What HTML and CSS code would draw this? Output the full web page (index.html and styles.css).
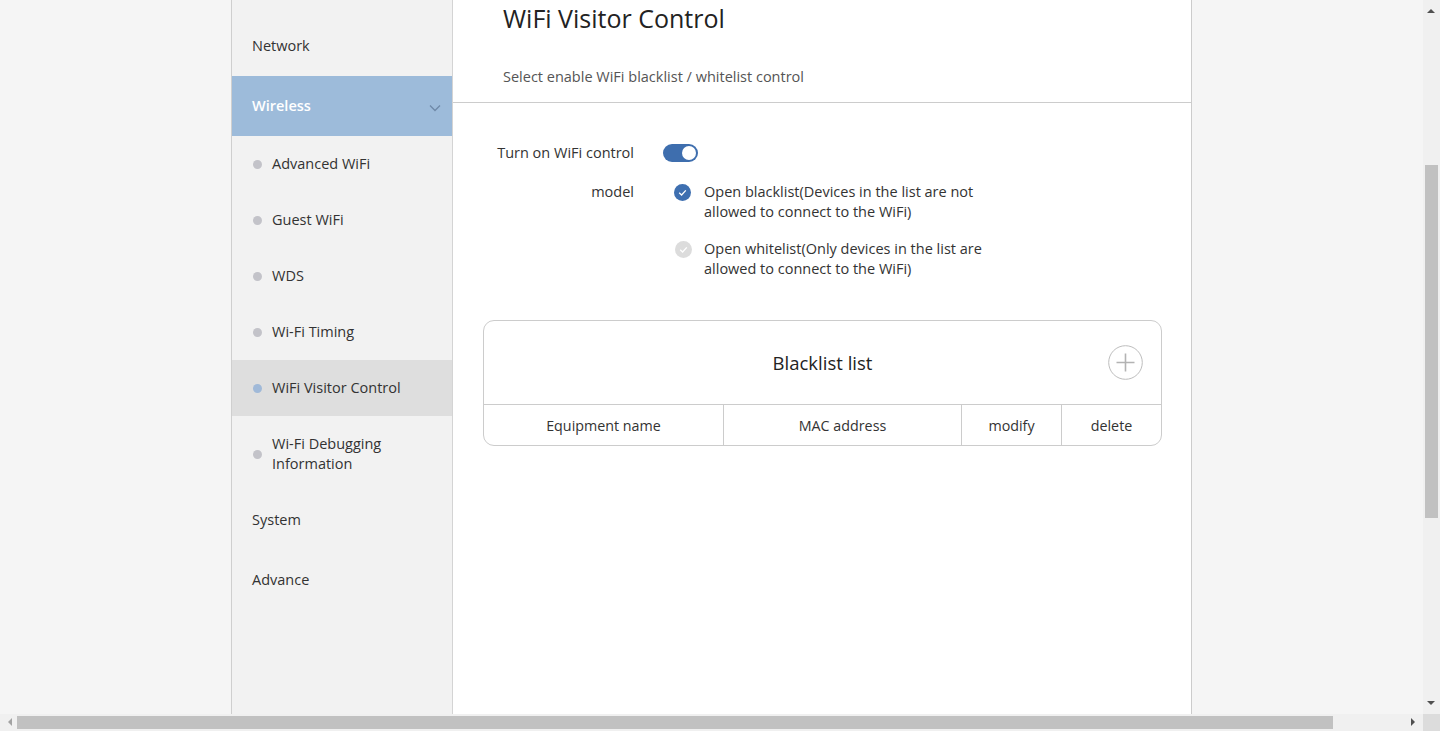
FILE: index.html
```html
<!DOCTYPE html>
<html lang="en">
<head>
<meta charset="utf-8">
<title>WiFi Visitor Control</title>
<link rel="stylesheet" href="styles.css">
</head>
<body>
<div class="screen">
  <div class="frame">
    <aside class="sidebar">
      <div class="nav-item">Network</div>
      <div class="nav-item nav-open">
        <span>Wireless</span>
        <svg class="chevron" width="12" height="8" viewBox="0 0 12 8"><path d="M1 1.5 L6 6.5 L11 1.5" fill="none" stroke="#6f89a8" stroke-width="1.3"/></svg>
      </div>
      <div class="sub-item"><span class="dot"></span><span>Advanced WiFi</span></div>
      <div class="sub-item"><span class="dot"></span><span>Guest WiFi</span></div>
      <div class="sub-item"><span class="dot"></span><span>WDS</span></div>
      <div class="sub-item"><span class="dot"></span><span>Wi-Fi Timing</span></div>
      <div class="sub-item sub-current"><span class="dot"></span><span>WiFi Visitor Control</span></div>
      <div class="sub-item sub-tall"><span class="dot"></span><span>Wi-Fi Debugging<br>Information</span></div>
      <div class="nav-item">System</div>
      <div class="nav-item">Advance</div>
    </aside>
    <main class="content">
      <header class="content-head">
        <h1 class="title">WiFi Visitor Control</h1>
        <p class="subtitle">Select enable WiFi blacklist / whitelist control</p>
      </header>
      <div class="form">
        <div class="form-row">
          <div class="form-label">Turn on WiFi control</div>
          <div class="switch"><span class="knob"></span></div>
        </div>
        <div class="form-row">
          <div class="form-label">model</div>
          <div class="options">
            <div class="option">
              <span class="check check-on"><svg width="17" height="17" viewBox="0 0 17 17"><path d="M5.2 8.8 L7.6 11 L11.8 6.4" fill="none" stroke="#fff" stroke-width="1.3"/></svg></span>
              <span class="option-text">Open blacklist(Devices in the list are not<br>allowed to connect to the WiFi)</span>
            </div>
            <div class="option">
              <span class="check check-off"><svg width="17" height="17" viewBox="0 0 17 17"><path d="M5.2 8.8 L7.6 11 L11.8 6.4" fill="none" stroke="#fff" stroke-width="1.3"/></svg></span>
              <span class="option-text">Open whitelist(Only devices in the list are<br>allowed to connect to the WiFi)</span>
            </div>
          </div>
        </div>
      </div>
      <section class="list-card">
        <div class="list-head">
          <span class="list-title">Blacklist list</span>
          <span class="add-btn"><svg width="35" height="35" viewBox="0 0 35 35"><circle cx="17.5" cy="17.5" r="16.8" fill="#fff" stroke="#bdbdbd" stroke-width="1"/><path d="M17.5 8.5 V26.5 M8.5 17.5 H26.5" stroke="#b3b3b3" stroke-width="1.6"/></svg></span>
        </div>
        <div class="list-cols">
          <div class="col col-name">Equipment name</div>
          <div class="col col-mac">MAC address</div>
          <div class="col col-mod">modify</div>
          <div class="col col-del">delete</div>
        </div>
      </section>
    </main>
  </div>
  <div class="vscroll">
    <span class="arrow arrow-up"></span>
    <span class="vthumb"></span>
    <span class="arrow arrow-down"></span>
  </div>
  <div class="hscroll">
    <span class="arrow arrow-left"></span>
    <span class="hthumb"></span>
    <span class="arrow arrow-right"></span>
  </div>
  <div class="corner"></div>
</div>
</body>
</html>
```
FILE: styles.css
```css
html, body {
  margin: 0;
  padding: 0;
}
body {
  font-family: "Open Sans", "Noto Sans", sans-serif;
  color: #333;
  background: #f5f5f5;
  overflow: hidden;
}
.screen {
  position: relative;
  width: 1440px;
  height: 731px;
  overflow: hidden;
  background: #f5f5f5;
}
.frame {
  width: 1423px;
  height: 714px;
  display: flex;
  justify-content: center;
}
.sidebar {
  width: 220px;
  border-left: 1px solid #cfcfcf;
  border-right: 1px solid #d4d4d4;
  background: #f2f2f2;
  padding-top: 16px;
  font-size: 14.5px;
  flex-shrink: 0;
}
.nav-item {
  height: 60px;
  display: flex;
  align-items: center;
  justify-content: space-between;
  padding: 0 11px 0 20px;
  box-sizing: border-box;
  line-height: 20px;
}
.nav-open {
  background: #9dbbda;
  color: #fff;
  font-weight: 600;
}
.chevron {
  margin-top: 3px;
}
.sub-item {
  height: 56px;
  display: flex;
  align-items: center;
  padding-left: 21px;
  line-height: 20px;
}
.sub-item .dot {
  width: 9px;
  height: 9px;
  border-radius: 50%;
  background: #c3c3c9;
  margin-right: 10px;
  flex-shrink: 0;
}
.sub-current {
  background: #dedede;
}
.sub-current .dot {
  background: #a0b9d8;
}
.sub-tall {
  height: 74px;
  padding-top: 2px;
  box-sizing: border-box;
}
.content {
  width: 738px;
  background: #fff;
  border-right: 1px solid #cccccc;
  flex-shrink: 0;
}
.content-head {
  padding: 2px 0 15px 50px;
  border-bottom: 1px solid #cccccc;
}
.title {
  margin: 0;
  font-size: 25px;
  font-weight: 400;
  line-height: 32px;
  color: #222;
}
.subtitle {
  margin: 33px 0 0;
  font-size: 14.5px;
  line-height: 20px;
  color: #555;
}
.form {
  padding-top: 40px;
  font-size: 14.5px;
  line-height: 20px;
}
.form-row {
  display: flex;
  align-items: flex-start;
}
.form-row + .form-row {
  margin-top: 19px;
}
.form-label {
  width: 181px;
  text-align: right;
  flex-shrink: 0;
}
.switch {
  margin-left: 29px;
  margin-top: 1px;
  width: 35px;
  height: 18px;
  border-radius: 9px;
  background: #3e6eae;
  display: flex;
  align-items: center;
  justify-content: flex-end;
  padding-right: 2px;
  box-sizing: border-box;
}
.knob {
  width: 14px;
  height: 14px;
  border-radius: 50%;
  background: #fff;
}
.options {
  margin-left: 40px;
  display: flex;
  flex-direction: column;
  gap: 17px;
}
.option {
  display: flex;
  align-items: flex-start;
}
.check {
  width: 17px;
  height: 17px;
  border-radius: 50%;
  margin-top: 2px;
  margin-right: 13px;
  flex-shrink: 0;
  display: block;
}
.check svg {
  display: block;
}
.check-on {
  background: #3e6fb0;
}
.check-off {
  background: #dcdcdc;
  margin-left: 1px;
  margin-right: 12px;
}
.list-card {
  margin: 41px 0 0 30px;
  width: 679px;
  box-sizing: border-box;
  border: 1px solid #cccccc;
  border-radius: 11px;
  overflow: hidden;
}
.list-head {
  height: 83px;
  display: flex;
  align-items: center;
  justify-content: center;
  position: relative;
  border-bottom: 1px solid #cccccc;
}
.list-title {
  font-size: 18.5px;
  color: #222;
}
.add-btn {
  position: absolute;
  right: 18px;
  top: 24px;
  width: 35px;
  height: 35px;
}
.add-btn svg {
  display: block;
}
.list-cols {
  display: flex;
  height: 40px;
  font-size: 14.3px;
}
.col {
  display: flex;
  align-items: center;
  justify-content: center;
  border-right: 1px solid #cccccc;
}
.col-name { width: 239px; }
.col-mac { width: 237px; }
.col-mod { width: 99px; }
.col-del { flex: 1; border-right: none; }

/* browser scrollbars drawn as overlays */
.vscroll {
  position: absolute;
  right: 0;
  top: 0;
  width: 17px;
  height: 714px;
  background: #f0f0f0;
}
.vthumb {
  position: absolute;
  left: 2px;
  top: 165px;
  width: 13px;
  height: 353px;
  background: #c1c1c1;
}
.hscroll {
  position: absolute;
  left: 0;
  bottom: 0;
  width: 1423px;
  height: 17px;
  background: #f0f0f0;
}
.hthumb {
  position: absolute;
  left: 17px;
  top: 2px;
  width: 1316px;
  height: 13px;
  background: #c1c1c1;
}
.corner {
  position: absolute;
  right: 0;
  bottom: 0;
  width: 17px;
  height: 17px;
  background: #dcdcdc;
}
.arrow {
  position: absolute;
  width: 0;
  height: 0;
  border: 4px solid transparent;
}
.arrow-up {
  left: 4px;
  top: 5px;
  border-bottom-color: #505050;
}
.arrow-down {
  left: 4px;
  bottom: 5px;
  border-top-color: #505050;
}
.arrow-left {
  left: 4px;
  top: 4px;
  border-right-color: #a3a3a3;
}
.arrow-right {
  right: 4px;
  top: 4px;
  border-left-color: #505050;
}
```
